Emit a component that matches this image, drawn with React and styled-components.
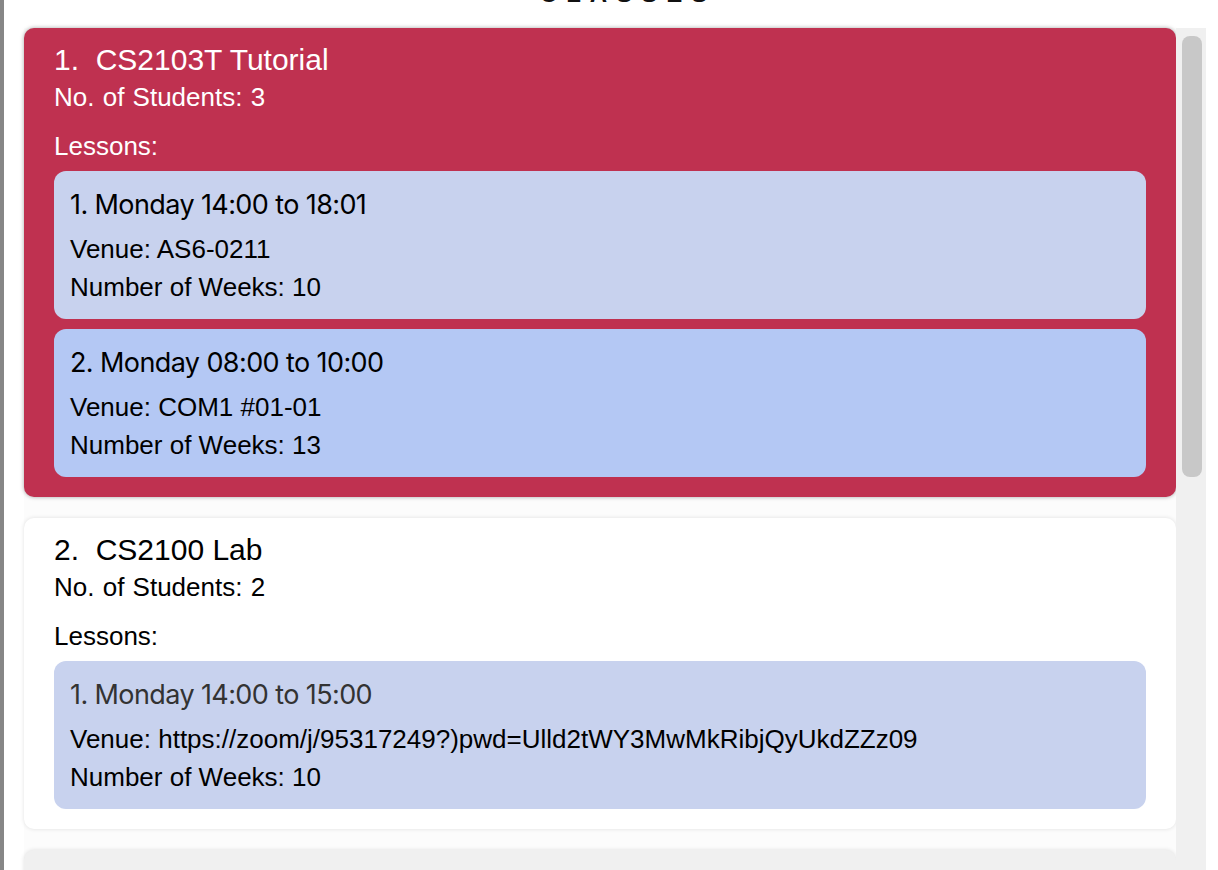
import React from "react";
import styled, { createGlobalStyle } from "styled-components";

const GlobalStyle = createGlobalStyle`
html, body {
    margin: 0;
    height: 870px;
    overflow: hidden;
    background: #ffffff;
}
`;

const Page = styled.div`
display: flex;
height: 870px;
font-family: "Liberation Sans", Arial, sans-serif;
`;
const Edge = styled.div`
width: 4px;
flex-shrink: 0;
background-color: #868686;
`;
const Main = styled.div`
flex: 1;
display: flex;
flex-direction: column;
padding: 0 12px 0 20px;
min-width: 0;
`;
const Header = styled.div`
height: 28px;
overflow: hidden;
display: flex;
justify-content: center;
`;
const Heading = styled.h1`
margin: -18px 0 0 26px;
font-size: 24px;
line-height: 24px;
font-weight: 700;
letter-spacing: 9px;
color: #111;
`;
const Panel = styled.div`
flex: 1;
display: flex;
min-height: 0;
`;
const List = styled.div`
flex: 1;
display: flex;
flex-direction: column;
gap: 21px;
background-color: #fcfcfc;
min-width: 0;
`;
const Track = styled.div`
width: 30px;
flex-shrink: 0;
background-color: #f0f0f0;
padding: 8px 4px 0 6px;
box-sizing: border-box;
`;
const Thumb = styled.div`
height: 441px;
border-radius: 8px;
background-color: #c8c8c8;
`;
const Card = styled.div`
flex-shrink: 0;
border-radius: 10px;
padding: 12px 30px 20px;
background-color: ${p => p.$tone === "selected" ? "#bf3150" : p.$tone === "muted" ? "#f0f0f0" : "#ffffff"};
color: ${p => p.$tone === "selected" ? "#ffffff" : "#000000"};
box-shadow: 0 0 4px rgba(0, 0, 0, ${p => p.$tone === "selected" ? 0.35 : 0.12});
min-height: ${p => p.$tone === "muted" ? "60px" : "auto"};
`;
const Title = styled.div`
font-size: 30px;
line-height: 40px;
white-space: pre;
`;
const Line = styled.div`
font-size: 26px;
line-height: 34px;
white-space: pre;
word-spacing: 1px;
`;
const LessonsLabel = styled(Line)`
margin-top: 15px;
margin-bottom: 8px;
`;
const Lessons = styled.div`
display: flex;
flex-direction: column;
gap: 10px;
`;
const Lesson = styled.div`
border-radius: 12px;
padding: 16px 16px 13px;
background-color: ${p => p.$active ? "#b4c8f4" : "#c8d2ee"};
color: #000;
`;
const LessonHead = styled.div`
font-family: Inter, "Liberation Sans", sans-serif;
font-size: 27px;
line-height: 36px;
letter-spacing: -0.6px;
margin-bottom: 7px;
color: ${p => p.$dim ? "#333333" : "#000000"};
`;
const LessonLine = styled.div`
font-size: 26px;
line-height: 38px;
`;

const classes = [
    {
        name: "CS2103T Tutorial",
        students: 3,
        selected: true,
        lessons: [
            { time: "Monday 14:00 to 18:01", venue: "AS6-0211", weeks: 10 },
            { time: "Monday 08:00 to 10:00", venue: "COM1 #01-01", weeks: 13, active: true },
        ],
    },
    {
        name: "CS2100 Lab",
        students: 2,
        lessons: [
            { time: "Monday 14:00 to 15:00", venue: "https://zoom/j/95317249?)pwd=Ulld2tWY3MwMkRibjQyUkdZZz09", weeks: 10, dim: true },
        ],
    },
];

export default function App(){
    return (
        <Page>
            <GlobalStyle />
            <Edge />
            <Main>
                <Header>
                    <Heading>CLASSES</Heading>
                </Header>
                <Panel>
                    <List>
                        {classes.map((c, i) => (
                            <Card key={c.name} $tone={c.selected ? "selected" : "plain"}>
                                <Title>{`${i + 1}.  ${c.name}`}</Title>
                                <Line>{`No. of Students: ${c.students}`}</Line>
                                <LessonsLabel>Lessons:</LessonsLabel>
                                <Lessons>
                                    {c.lessons.map((l, j) => (
                                        <Lesson key={j} $active={l.active}>
                                            <LessonHead $dim={l.dim}>{`${j + 1}. ${l.time}`}</LessonHead>
                                            <LessonLine>Venue: {l.venue}</LessonLine>
                                            <LessonLine>Number of Weeks: {l.weeks}</LessonLine>
                                        </Lesson>
                                    ))}
                                </Lessons>
                            </Card>
                        ))}
                        <Card $tone="muted" />
                    </List>
                    <Track>
                        <Thumb />
                    </Track>
                </Panel>
            </Main>
        </Page>
    );
}
